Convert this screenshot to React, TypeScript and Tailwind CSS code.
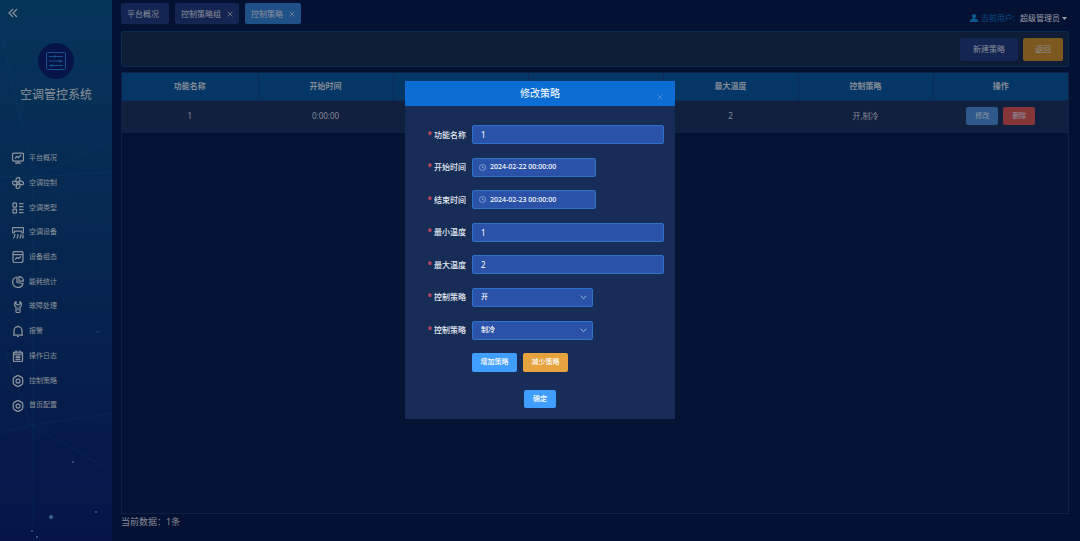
import type { ReactNode } from 'react'

const TABS = [
  { label: '平台概况', closable: false, active: false },
  { label: '控制策略组', closable: true, active: false },
  { label: '控制策略', closable: true, active: true },
]

const COLUMNS = ['功能名称', '开始时间', '结束时间', '最小温度', '最大温度', '控制策略', '操作']

const hexagon = (
  <>
    <path d="M9.8 1.8a4 4 0 0 1 4.4 0l5.2 3a4 4 0 0 1 2.1 3.6v7.2a4 4 0 0 1-2.1 3.6l-5.2 3a4 4 0 0 1-4.4 0l-5.2-3a4 4 0 0 1-2.1-3.6V8.4a4 4 0 0 1 2.1-3.6z" />
    <circle cx="12" cy="12" r="4" />
  </>
)

const MENU: { label: string; icon: ReactNode; expandable?: boolean }[] = [
  {
    label: '平台概况',
    icon: (
      <>
        <rect x="1" y="2" width="22" height="16" rx="3" />
        <path d="M6 13l4-4 3 2 5-5M6 22h12M12 18v4" />
      </>
    ),
  },
  {
    label: '空调控制',
    icon: (
      <>
        <circle cx="12" cy="12" r="2.5" />
        <path d="M10 10.500C6 8 8 1 13 1c4 0 3 5 0 8.500" />
        <path d="M13.500 10C16 6 23 8 23 13c0 4-5 3-8.500 0" />
        <path d="M14 13.500C18 16 16 23 11 23c-4 0-3-5 0-8.500" />
        <path d="M10.500 14C8 18 1 16 1 11c0-4 5-3 8.500 0" />
      </>
    ),
  },
  {
    label: '空调类型',
    icon: (
      <>
        <rect x="2" y="2" width="7" height="8" rx="1" />
        <rect x="2" y="14" width="7" height="8" rx="1" />
        <path d="M14 3h9M14 9h9M14 15h9M14 21h9" />
      </>
    ),
  },
  {
    label: '空调设备',
    icon: (
      <>
        <path d="M4 12H3a2 2 0 0 1-2-2V3a2 2 0 0 1 2-2h18a2 2 0 0 1 2 2v7a2 2 0 0 1-2 2h-1" />
        <path d="M5 12V8h14v4M6 14c0 4-1 6-3 9M12 14c0 4 0 6-2 9M18 14c0 4 0 6-2 9M22 15v8" />
      </>
    ),
  },
  {
    label: '设备组态',
    icon: (
      <>
        <rect x="2" y="1" width="20" height="22" rx="4" />
        <path d="M2 7h20M6 17l4-4 3 2 5-4" />
      </>
    ),
  },
  {
    label: '能耗统计',
    icon: (
      <>
        <path d="M10 2a10.500 10.500 0 1 0 12 13l-12-2z" />
        <path d="M14 1v9h9a9 9 0 0 0-9-9z" />
      </>
    ),
  },
  {
    label: '故障处理',
    icon: (
      <>
        <path d="M8 1a6.500 6.500 0 0 0 0 11v9a2 2 0 0 0 2 2h4a2 2 0 0 0 2-2v-9a6.500 6.500 0 0 0 0-11v5l-4 2-4-2z" />
        <path d="M12 13v6" />
      </>
    ),
  },
  {
    label: '报警',
    icon: <path d="M2 20h20M4 20v-9a8 8 0 0 1 16 0v9M12 3V1M10 23h4" />,
    expandable: true,
  },
  {
    label: '操作日志',
    icon: (
      <>
        <rect x="3" y="4" width="18" height="19" rx="2" />
        <path d="M3 8h18M8 1v5M16 1v5M7 12h10M7 15h10M7 19h10" />
      </>
    ),
  },
  { label: '控制策略', icon: hexagon },
  { label: '首页配置', icon: hexagon },
]

const BOX = 'rounded-xs border border-[#2f72ca] bg-[#2a52a8] text-white outline-none'

function Cross({ className }: { className: string }) {
  return (
    <svg viewBox="0 0 10 10" className={className} fill="none" stroke="currentColor" strokeWidth="1.2" aria-hidden="true">
      <path d="M1 1l8 8M9 1L1 9" />
    </svg>
  )
}

function Sidebar() {
  return (
    <aside className="relative flex w-28 shrink-0 flex-col overflow-hidden bg-linear-to-b from-[#06355a] via-[#06254f] to-[#061447] text-[#8d939c]">
      {/* constellation lines behind the menu */}
      <svg
        className="absolute inset-0 h-full w-full"
        viewBox="0 0 112 541"
        preserveAspectRatio="none"
        fill="none"
        aria-hidden="true"
      >
        <g stroke="#0f5a80" strokeOpacity="0.18">
          <path d="M0 30L35 177L112 140M0 177h35l77-5M35 177l77 55M33 177v350M0 433l31-8 81-12M31 425l81 46M31 425L5 350" />
        </g>
        <g fill="#3f6288">
          <circle cx="73" cy="462" r="1" />
          <circle cx="51" cy="517" r="2" />
          <circle cx="96" cy="512" r="1" />
          <circle cx="32" cy="531" r="1" />
          <circle cx="37" cy="537" r="1" />
        </g>
      </svg>

      <div className="relative flex h-[43px] items-start px-2 pt-2">
        <button type="button" aria-label="收起菜单">
          <svg viewBox="0 0 10 10" className="size-[10px]" fill="none" stroke="currentColor" strokeWidth="1.2">
            <path d="M5 1L1 5l4 4M9 1L5 5l4 4" />
          </svg>
        </button>
      </div>

      <div className="relative flex flex-col items-center">
        <div className="flex size-9 items-center justify-center rounded-full bg-[#061447]">
          <svg viewBox="0 0 20 18" className="h-[18px] w-5" fill="none" stroke="#17508a" aria-hidden="true">
            <rect x="0.5" y="0.5" width="19" height="17" rx="1" />
            <path d="M3 4.5h14M3 9h14M3 13.5h14" />
            <path d="M8 4.5h2M13 9h2M5 13.5h2" strokeWidth="2" />
          </svg>
        </div>
        <h1 className="mt-[7px] text-[12px] leading-[18px]">空调管控系统</h1>
      </div>

      <nav className="relative mt-[42px]">
        <ul className="grid h-68 auto-rows-fr">
          {MENU.map((item, i) => (
            <li key={i}>
              <a href="#" className="flex h-full items-center gap-[5px] px-3 text-[7px]">
                <svg
                  viewBox="0 0 24 24"
                  className="size-3"
                  fill="none"
                  stroke="currentColor"
                  strokeWidth="2.5"
                  strokeLinejoin="round"
                  aria-hidden="true"
                >
                  {item.icon}
                </svg>
                <span>{item.label}</span>
                {item.expandable && (
                  <svg viewBox="0 0 10 6" className="ml-auto h-[3px] w-[5px]" fill="none" stroke="#24466c" strokeWidth="2">
                    <path d="M1 1l4 4 4-4" />
                  </svg>
                )}
              </a>
            </li>
          ))}
        </ul>
      </nav>
    </aside>
  )
}

function TopBar() {
  return (
    <header className="flex items-start justify-between pt-[3px]">
      <div className="flex gap-[6px]">
        {TABS.map((tab) => (
          <div
            key={tab.label}
            className={`flex h-[21px] items-center gap-[6px] rounded-xs pl-[6px] text-[8px] text-[#8b909b] ${
              tab.active ? 'bg-[#1f5088]' : 'bg-[#142453]'
            } ${tab.closable ? 'pr-[6px]' : 'pr-[10px]'}`}
          >
            <a href="#">{tab.label}</a>
            {tab.closable && (
              <button type="button" aria-label={`关闭${tab.label}`}>
                <Cross className="size-[6px]" />
              </button>
            )}
          </div>
        ))}
      </div>
      <button type="button" className="mt-[9px] mr-[2px] flex items-center text-[8px] leading-3 text-[#9a9fa9]">
        <svg viewBox="0 0 16 16" className="mr-[3px] size-2" fill="#07588f" aria-hidden="true">
          <path d="M8 0a4.2 4.2 0 0 1 2 8v1l5 2q1 1 1 5H0q0-4 1-5l5-2V8a4.2 4.2 0 0 1 2-8z" />
        </svg>
        <span className="mr-[5px] text-[#07508a]">当前用户:</span>
        <span>超级管理员</span>
        <svg viewBox="0 0 10 6" className="ml-[2px] h-[3px] w-[5px]" fill="currentColor" aria-hidden="true">
          <path d="M0 0h10L5 6z" />
        </svg>
      </button>
    </header>
  )
}

function StrategyTable() {
  return (
    <div className="mt-[5px] flex-1 border border-[#0c2148] bg-[#051234]">
      <table className="w-full table-fixed border-collapse text-center text-[8px] text-[#858c96]">
        <thead>
          <tr className="h-[27px] bg-[#053766]">
            {COLUMNS.map((col) => (
              <th key={col} scope="col" className="border-r border-b border-[#0b2a57] p-0 font-bold last:border-r-0 first:w-[136px]">
                {col}
              </th>
            ))}
          </tr>
        </thead>
        <tbody>
          <tr className="h-8 bg-[#12203f]">
            {['1', '0:00:00', '0:00:00', '1', '2', '开,制冷'].map((cell, i) => (
              <td key={i} className="border-r border-b border-[#0c2148] p-0">
                {cell}
              </td>
            ))}
            <td className="border-b border-[#0c2148] p-0">
              <div className="flex justify-center gap-[5px] text-[7px] text-[#9199a6]">
                <button type="button" className="h-[18px] w-8 rounded-xs bg-[#2d5a8a]">
                  修改
                </button>
                <button type="button" className="h-[18px] w-8 rounded-xs bg-[#853639]">
                  删除
                </button>
              </div>
            </td>
          </tr>
        </tbody>
      </table>
    </div>
  )
}

function Field({ id, label, children }: { id: string; label: string; children: ReactNode }) {
  return (
    <div className="flex h-[19px] items-center gap-[6px]">
      <label htmlFor={id} className="flex w-[61px] shrink-0 justify-end gap-[2px] text-[8px] font-medium text-[#e4e8f0]">
        <span className="text-[#f0555f]">*</span>
        {label}
      </label>
      {children}
    </div>
  )
}

function TextField({ id, label, value }: { id: string; label: string; value: string }) {
  return (
    <Field id={id} label={label}>
      <input id={id} type="text" defaultValue={value} className={`h-full min-w-0 flex-1 px-2 text-[8px] ${BOX}`} />
    </Field>
  )
}

function DateField({ id, label, value }: { id: string; label: string; value: string }) {
  return (
    <Field id={id} label={label}>
      <div className={`flex h-full w-[124px] items-center gap-1 pl-[6px] ${BOX}`}>
        <svg viewBox="0 0 16 16" className="size-[7px] shrink-0" fill="none" stroke="#a9bbdf" strokeWidth="1.5" aria-hidden="true">
          <circle cx="8" cy="8" r="7" />
          <path d="M8 4v4.5h4" />
        </svg>
        <input id={id} type="text" defaultValue={value} className="w-full min-w-0 bg-transparent text-[7px] font-medium outline-none" />
      </div>
    </Field>
  )
}

function SelectField({ id, label, options }: { id: string; label: string; options: string[] }) {
  return (
    <Field id={id} label={label}>
      <div className="relative flex h-full w-[121px] items-center">
        <select id={id} className={`block h-full w-full appearance-none px-2 text-[7px] font-medium ${BOX}`}>
          {options.map((option) => (
            <option key={option}>{option}</option>
          ))}
        </select>
        <svg
          viewBox="0 0 12 8"
          className="pointer-events-none absolute right-[6px] h-[5px] w-[7px]"
          fill="none"
          stroke="#b6c4e2"
          strokeWidth="1.5"
          aria-hidden="true"
        >
          <path d="M1 1l5 5 5-5" />
        </svg>
      </div>
    </Field>
  )
}

function EditDialog() {
  return (
    <div className="fixed inset-0 flex items-start justify-center pt-[15vh]">
      <div role="dialog" aria-labelledby="dialog-title" className="w-[270px] bg-[#172d58]">
        <div className="relative flex h-[25px] items-center justify-center bg-[#0c6ed5]">
          <h2 id="dialog-title" className="text-[10px] text-white">
            修改策略
          </h2>
          <button type="button" aria-label="关闭" className="absolute right-3 bottom-[6px] text-[#5b98d8]">
            <Cross className="size-[6px]" />
          </button>
        </div>
        <form className="pt-[19px] pr-[11px] pb-[11px]" onSubmit={(e) => e.preventDefault()}>
          <div className="flex h-[247px] flex-col justify-between">
            <TextField id="name" label="功能名称" value="1" />
            <DateField id="start" label="开始时间" value="2024-02-22 00:00:00" />
            <DateField id="end" label="结束时间" value="2024-02-23 00:00:00" />
            <TextField id="min" label="最小温度" value="1" />
            <TextField id="max" label="最大温度" value="2" />
            <SelectField id="power" label="控制策略" options={['开', '关']} />
            <SelectField id="mode" label="控制策略" options={['制冷', '制热']} />
            <div className="flex gap-[6px] pl-[67px] text-[7px] font-medium text-white">
              <button type="button" className="h-[19px] w-[45px] rounded-xs bg-[#409eff]">
                增加策略
              </button>
              <button type="button" className="h-[19px] w-[45px] rounded-xs bg-[#e6a23c]">
                减少策略
              </button>
            </div>
          </div>
          <div className="mt-[18px] flex justify-center pl-[11px]">
            <button type="submit" className="h-[18px] w-8 rounded-xs bg-[#409eff] text-[7px] font-medium text-white">
              确定
            </button>
          </div>
        </form>
      </div>
    </div>
  )
}

export default function App() {
  return (
    <div className="flex min-h-screen bg-[#051133] font-['Noto_Sans','Noto_Sans_CJK_SC',sans-serif]">
      <Sidebar />
      <main className="flex flex-1 flex-col pr-[11px] pl-[9px]">
        <TopBar />
        <div className="mt-[7px] flex h-9 shrink-0 items-center justify-end gap-[5px] rounded-xs border border-[#0b2a50] bg-[#0f1c36] pr-[5px] text-[8px] text-[#8b909b]">
          <button type="button" className="h-[23px] w-[58px] rounded-xs bg-[#142453]">
            新建策略
          </button>
          <button type="button" className="h-[23px] w-10 rounded-xs bg-[#7d5720]">
            返回
          </button>
        </div>
        <StrategyTable />
        <p className="h-[27px] text-[9px] leading-[15px] text-[#858c96]">当前数据：1条</p>
      </main>
      <EditDialog />
    </div>
  )
}
